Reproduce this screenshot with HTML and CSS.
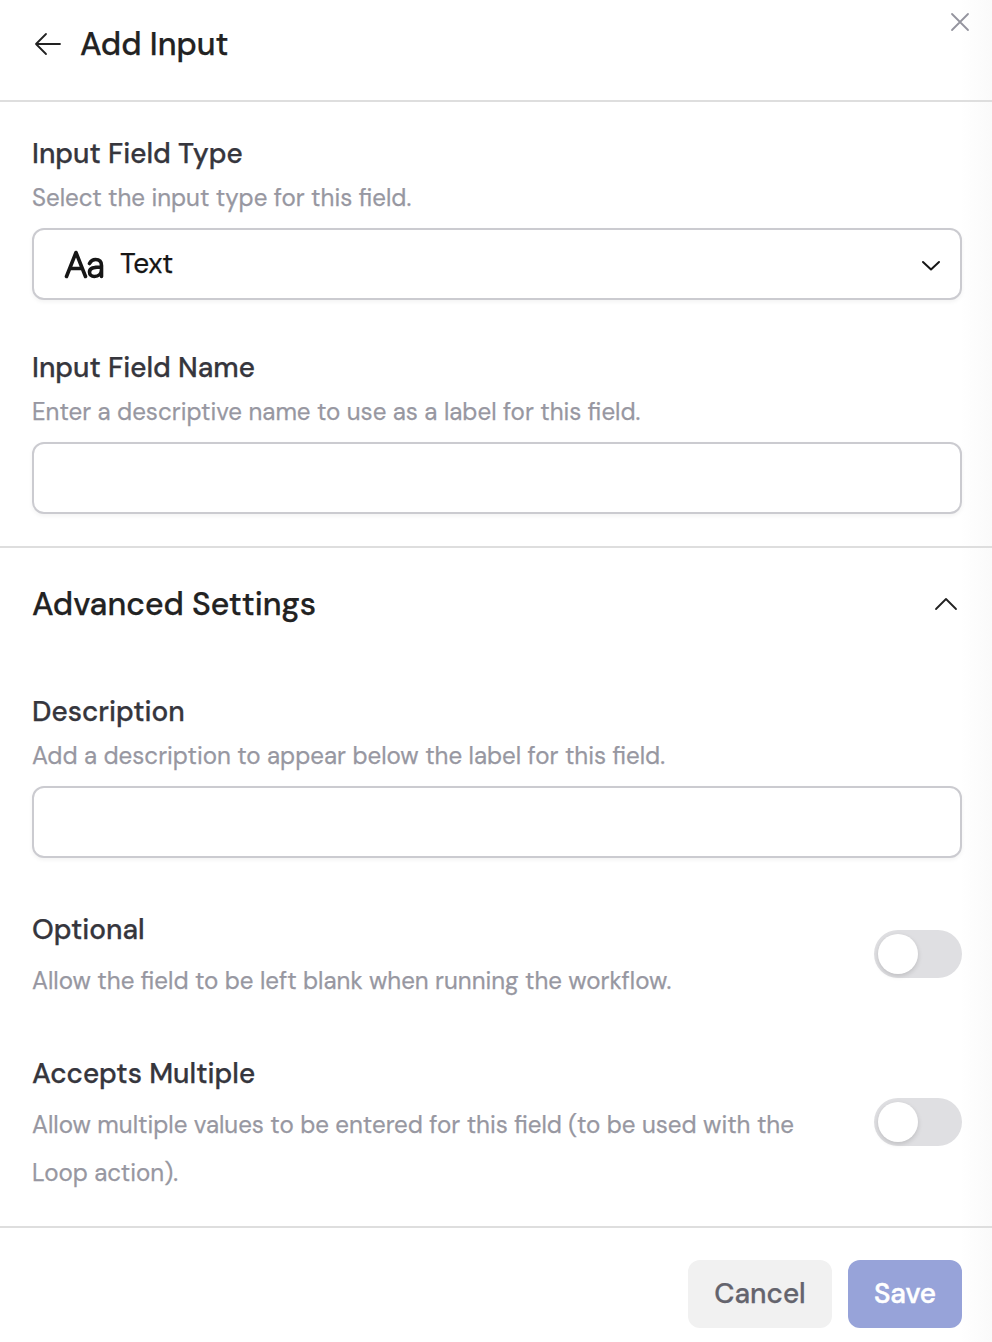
FILE: index.html
```html
<!DOCTYPE html>
<html lang="en">
<head>
<meta charset="UTF-8">
<meta name="viewport" content="width=device-width, initial-scale=1.0">
<title>Add Input</title>
<link rel="stylesheet" href="styles.css">
</head>
<body>

<div class="panel">
    <header class="panel-header">
        <svg class="back" width="28" height="24" viewBox="0 0 28 24"><path d="M26 12H2M12 2L2 12l10 10"/></svg>
        <h1>Add Input</h1>
        <svg class="close" width="20" height="20" viewBox="0 0 20 20"><path d="M2 2l16 16M18 2L2 18"/></svg>
    </header>

    <section class="basic">
        <div class="field">
            <label class="label">Input Field Type</label>
            <p class="help">Select the input type for this field.</p>
            <div class="box select">
                <svg class="type-icon" width="40" height="30" viewBox="0 0 40 30"><path d="M2.500 27.500L12 3.500 21.500 27.500M6 19.500h12M25.500 14.500c1.500-3 3.500-4 6-4 4 0 6 2.200 6 6v11M37.500 18c-8 0-12 1-12 5 0 2.700 2 4.500 4.700 4.500 4.500 0 7.300-3 7.300-6.800"/></svg>
                <span class="value">Text</span>
                <svg class="chevron" width="20" height="12" viewBox="0 0 20 12"><path d="M2 2l8 7.500L18 2"/></svg>
            </div>
        </div>
        <div class="field">
            <label class="label" for="name">Input Field Name</label>
            <p class="help">Enter a descriptive name to use as a label for this field.</p>
            <input class="box" id="name" type="text">
        </div>
    </section>

    <section class="advanced">
        <div class="advanced-header">
            <h2>Advanced Settings</h2>
            <svg class="collapse" width="24" height="14" viewBox="0 0 24 14"><path d="M2 12L12 2l10 10"/></svg>
        </div>
        <div class="field">
            <label class="label" for="description">Description</label>
            <p class="help">Add a description to appear below the label for this field.</p>
            <input class="box" id="description" type="text">
        </div>
        <div class="toggle-row">
            <div class="toggle-text">
                <span class="label">Optional</span>
                <p class="help">Allow the field to be left blank when running the workflow.</p>
            </div>
            <div class="toggle"><div class="knob"></div></div>
        </div>
        <div class="toggle-row">
            <div class="toggle-text">
                <span class="label">Accepts Multiple</span>
                <p class="help">Allow multiple values to be entered for this field (to be used with the Loop action).</p>
            </div>
            <div class="toggle"><div class="knob"></div></div>
        </div>
    </section>

    <footer class="panel-footer">
        <button class="cancel">Cancel</button>
        <button class="save">Save</button>
    </footer>
</div>

</body>
</html>
```
FILE: styles.css
```css
* {
    box-sizing: border-box;
}
body {
    margin: 0;
    background: linear-gradient(to right, #ffffff 960px, #fafafa 992px);
    font-family: "DM Sans", Inter, sans-serif;
    color: #222222;
    -webkit-text-stroke: 0.25px;
}
h1, h2, p {
    margin: 0;
}
svg {
    display: block;
    flex: none;
    fill: none;
    stroke: currentColor;
    stroke-width: 1.8;
    stroke-linecap: round;
    stroke-linejoin: round;
}
.panel {
    height: 1342px;
    overflow: hidden;
}
.panel-header {
    display: flex;
    height: 102px;
    padding: 12px 22px 0 34px;
    border-bottom: 2px solid #dedede;
}
.back {
    margin: 20px 18px 0 0;
}
h1, h2 {
    font-size: 32px;
    font-weight: 550;
    line-height: 64px;
}
.close {
    margin-left: auto;
    color: #94949e;
}
.basic {
    display: flex;
    flex-direction: column;
    gap: 48px;
    padding: 32px 30px 32px 32px;
    border-bottom: 2px solid #dedede;
}
.label {
    display: block;
    font-size: 28px;
    font-weight: 500;
    line-height: 40px;
    color: #36363d;
}
.help {
    font-size: 24.1px;
    line-height: 48px;
    color: #9797a1;
}
.box {
    display: flex;
    align-items: center;
    width: 100%;
    height: 72px;
    margin-top: 6px;
    padding: 0 19px 0 30px;
    background: #ffffff;
    border: 2px solid #cbcbd0;
    border-radius: 12px;
    box-shadow: 0 2px 4px rgba(0, 0, 0, 0.05);
    font: inherit;
    outline: none;
}
.type-icon {
    margin-right: 16px;
    stroke-width: 3.6;
    color: #161616;
}
.value {
    margin-top: -2px;
    font-size: 28px;
    color: #161616;
}
.chevron {
    margin-left: auto;
    margin-top: 3px;
    stroke-width: 2;
    color: #161616;
}
.advanced {
    padding: 32px 30px 32px 32px;
    border-bottom: 2px solid #dedede;
}
.advanced-header {
    display: flex;
    justify-content: space-between;
    align-items: center;
    height: 48px;
    margin-bottom: 64px;
    padding-right: 4px;
}
.toggle-row {
    display: flex;
    justify-content: space-between;
    align-items: center;
    margin-top: 48px;
}
.toggle-text {
    width: 790px;
}
.toggle-text .label {
    line-height: 48px;
}
.toggle-text .help {
    position: relative;
    top: 3px;
}
.toggle {
    width: 88px;
    height: 48px;
    padding: 4px;
    background: #dfdfe2;
    border-radius: 24px;
}
.knob {
    width: 40px;
    height: 40px;
    background: #ffffff;
    border-radius: 50%;
    box-shadow: 0 2px 5px rgba(0, 0, 0, 0.15);
}
.panel-footer {
    display: flex;
    justify-content: flex-end;
    gap: 16px;
    padding: 32px 30px 14px;
}
button {
    height: 68px;
    padding: 0 0 2px;
    border: none;
    border-radius: 12px;
    font-family: inherit;
    font-size: 28px;
    cursor: pointer;
}
.cancel {
    width: 144px;
    background: #f1f1f1;
    color: #64646d;
    font-weight: 500;
}
.save {
    width: 114px;
    background: #97a3d9;
    color: #ffffff;
    font-weight: 550;
    -webkit-text-stroke: 0.5px;
}
```
